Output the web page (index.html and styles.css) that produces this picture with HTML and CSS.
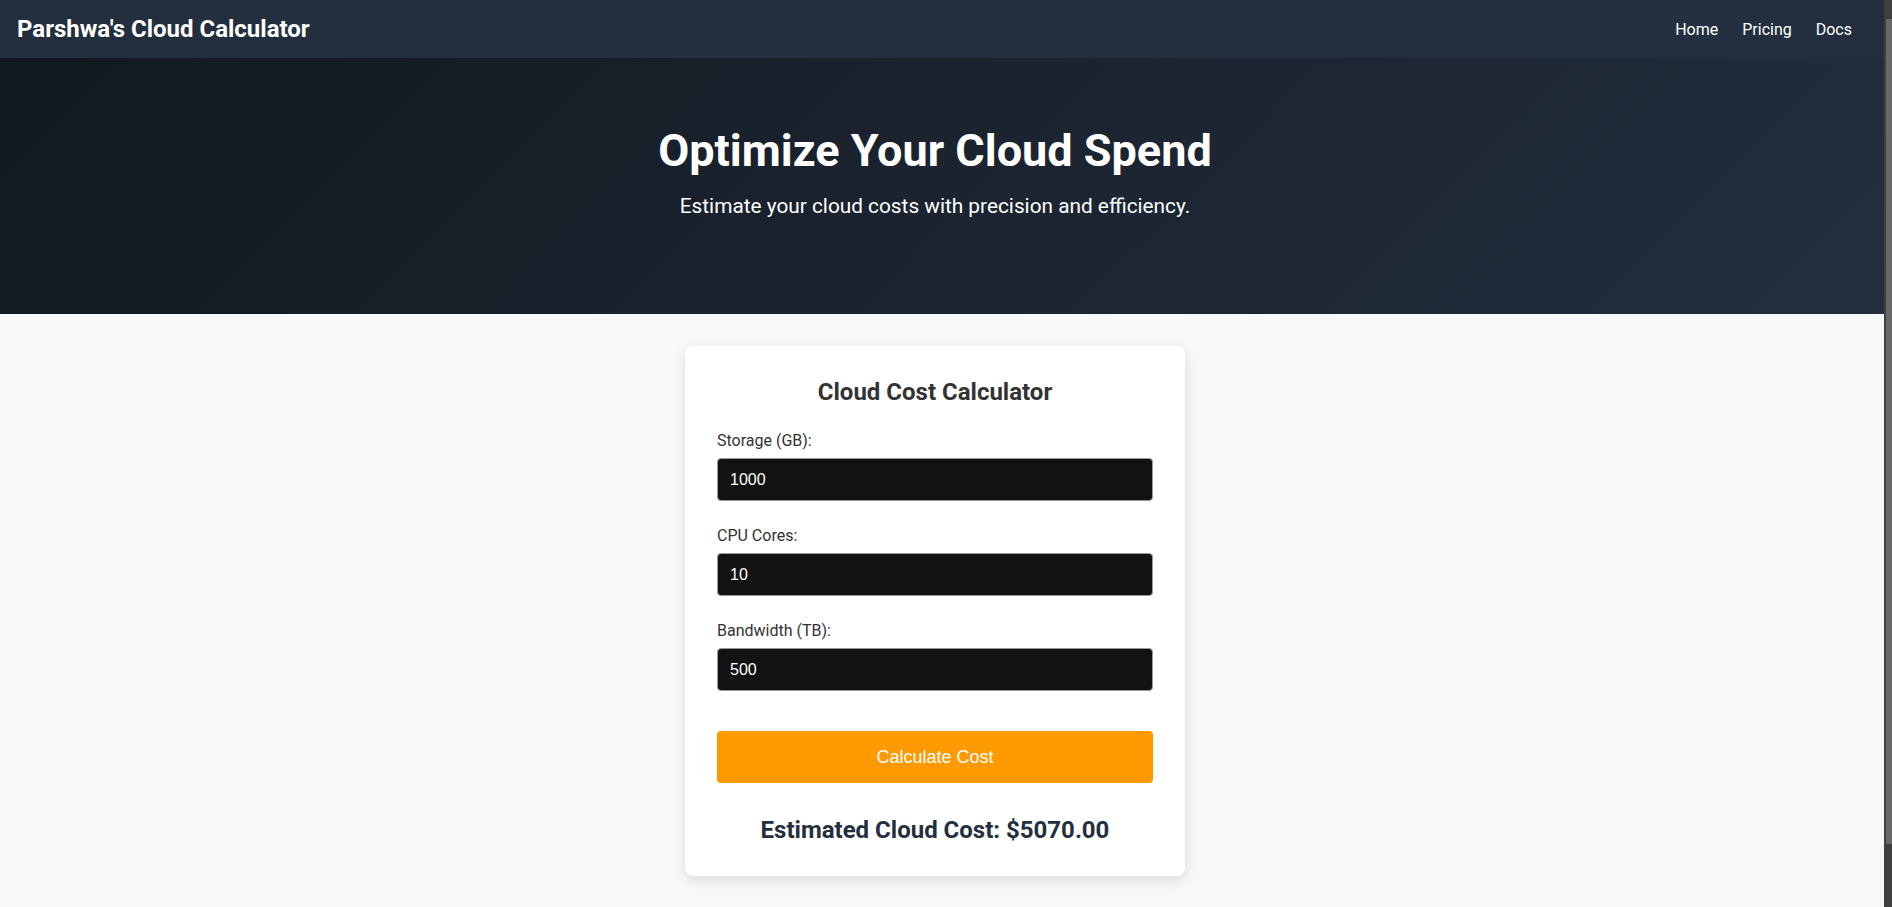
FILE: index.html
```html
<!DOCTYPE html>
<html lang="en">
<head>
<meta charset="utf-8">
<title>Parshwa's Cloud Calculator</title>
<link rel="stylesheet" href="styles.css">
</head>
<body>
<header class="navbar">
  <div class="brand">Parshwa's Cloud Calculator</div>
  <nav class="nav-links">
    <a href="#" class="nav-link">Home</a>
    <a href="#" class="nav-link">Pricing</a>
    <a href="#" class="nav-link">Docs</a>
  </nav>
</header>
<section class="hero">
  <h1 class="hero-title">Optimize Your Cloud Spend</h1>
  <p class="hero-sub">Estimate your cloud costs with precision and efficiency.</p>
</section>
<main class="main">
  <div class="card">
    <h2 class="card-title">Cloud Cost Calculator</h2>
    <div class="field">
      <label class="field-label" for="storage">Storage (GB):</label>
      <input class="field-input" id="storage" type="number" value="1000">
    </div>
    <div class="field">
      <label class="field-label" for="cpu">CPU Cores:</label>
      <input class="field-input" id="cpu" type="number" value="10">
    </div>
    <div class="field">
      <label class="field-label" for="bw">Bandwidth (TB):</label>
      <input class="field-input" id="bw" type="number" value="500">
    </div>
    <button class="calc-btn" type="button">Calculate Cost</button>
    <div class="result">Estimated Cloud Cost: $5070.00</div>
  </div>
</main>
</body>
</html>
```
FILE: styles.css
```css
html {
  background: #3f3f3f linear-gradient(#686868, #686868) no-repeat right 0 top 19px / 6px 825px;
}
body {
  margin: 0 8px 0 0;
  font-family: Roboto, "Liberation Sans", Arial, sans-serif;
  background: #f7f8fa;
  color: #333;
}
.navbar {
  height: 58px;
  background: #232f3e;
  display: flex;
  align-items: center;
  justify-content: space-between;
  padding: 0 32px 0 17px;
}
.brand {
  color: #fff;
  font-size: 24px;
  font-weight: 700;
}
.nav-links {
  display: flex;
  gap: 24px;
}
.nav-link {
  color: #fff;
  text-decoration: none;
  font-size: 16px;
}
.hero {
  background: linear-gradient(135deg, #121820 0%, #232f3e 100%);
  color: #fff;
  text-align: center;
  padding: 66px 14px 0 0;
  height: 256px;
  box-sizing: border-box;
}
.hero-title {
  margin: 0;
  font-size: 45px;
  font-weight: 700;
}
.hero-sub {
  margin: 17px 0 0;
  font-size: 20.8px;
}
.main {
  display: flex;
  justify-content: center;
  padding: 32px 14px 87px 0;
}
.card {
  width: 500px;
  box-sizing: border-box;
  background: #fff;
  border-radius: 8px;
  box-shadow: 0 4px 14px rgba(0, 0, 0, 0.12);
  padding: 32px;
}
.card-title {
  margin: 0 0 25px;
  font-size: 24px;
  font-weight: 700;
  color: #333;
  text-align: center;
}
.field {
  margin-bottom: 25px;
}
.field-label {
  display: block;
  font-size: 16px;
  margin-bottom: 8px;
  color: #333;
}
.field-input {
  display: block;
  width: 100%;
  height: 43px;
  box-sizing: border-box;
  background: #121212;
  color: #fff;
  border: 1px solid #999;
  border-radius: 4px;
  padding: 0 12px;
  font-family: "Liberation Sans", Arial, sans-serif;
  font-size: 16px;
}
.calc-btn {
  display: block;
  width: 100%;
  height: 52px;
  margin-top: 40px;
  background: #ff9900;
  color: #fff;
  border: none;
  border-radius: 4px;
  font-family: "Liberation Sans", Arial, sans-serif;
  font-size: 18px;
}
.field:last-of-type {
  margin-bottom: 0;
}
.result {
  margin-top: 33px;
  text-align: center;
  font-size: 24px;
  font-weight: 700;
  color: #232f3e;
}
```
